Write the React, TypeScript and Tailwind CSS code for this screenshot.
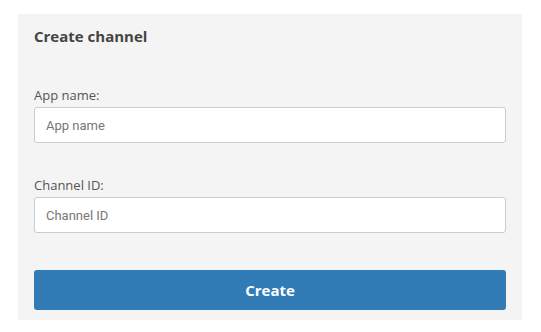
import React from 'react';

const App = () => {
  return (
    <div className="w-[541px] h-[332px] bg-white pt-[14px] pl-[18px]">
      <div className="w-[504px] h-[306px] bg-[#f4f4f4] px-[16px] pt-[12px] font-['Open_Sans',sans-serif]">
        <h2 className="text-[15px] leading-[20px] font-bold text-[#444]">Create channel</h2>

        <form className="mt-[40px]" onSubmit={(e) => e.preventDefault()}>
          <label className="block text-[13px] leading-[18px] text-[#555]">App name:</label>
          <input
            type="text"
            placeholder="App name"
            className="mt-[3px] block w-full h-[36px] bg-white border border-[#cccccc] rounded-[3px] px-[11px] text-[13px] font-['Roboto',sans-serif] text-[#555] placeholder:text-[#777] outline-none"
          />

          <label className="block mt-[33px] text-[13px] leading-[18px] text-[#555]">Channel ID:</label>
          <input
            type="text"
            placeholder="Channel ID"
            className="mt-[3px] block w-full h-[36px] bg-white border border-[#cccccc] rounded-[3px] px-[11px] text-[13px] font-['Roboto',sans-serif] text-[#555] placeholder:text-[#777] outline-none"
          />

          <button
            type="submit"
            className="mt-[37px] block w-full h-[40px] bg-[#317bb7] rounded-[3px] text-white text-[15px] font-bold"
          >
            Create
          </button>
        </form>
      </div>
    </div>
  );
};

export default App;
